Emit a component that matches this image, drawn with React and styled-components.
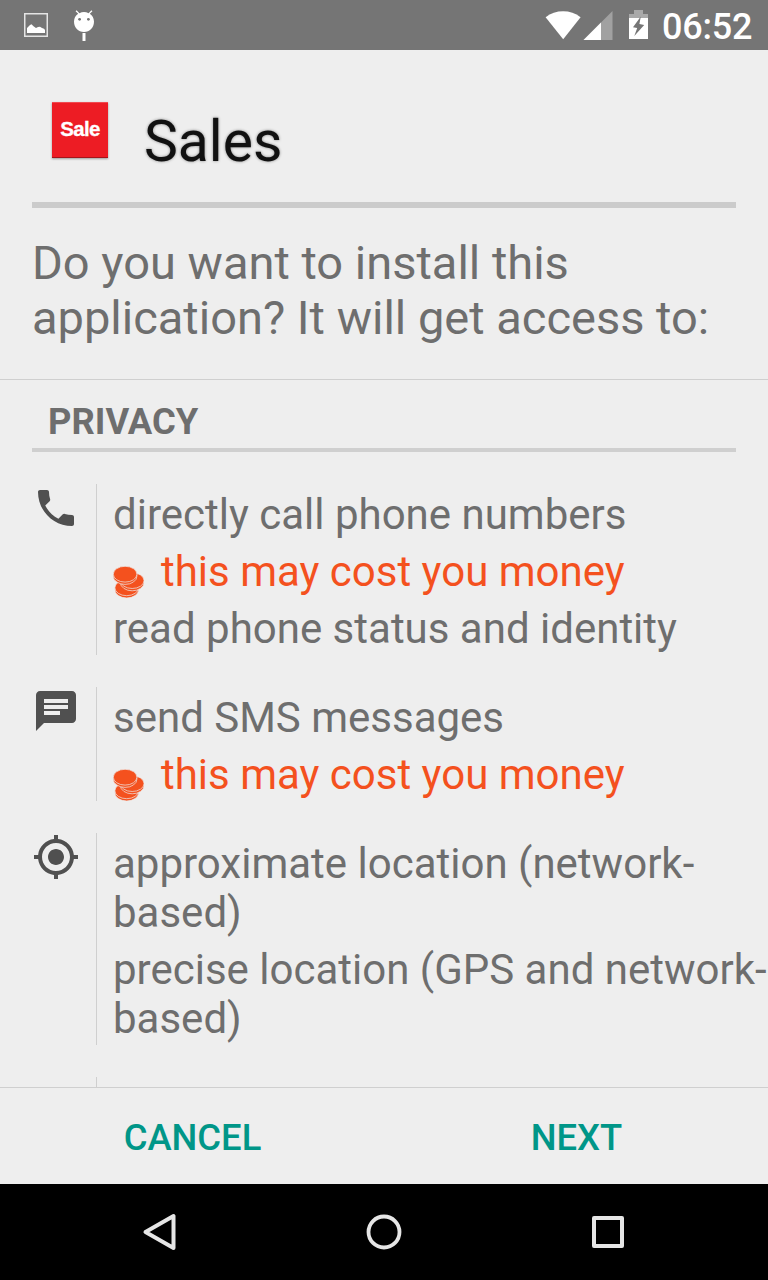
import React from "react";
import styled, { createGlobalStyle } from "styled-components";

const GlobalStyle = createGlobalStyle`
  * { box-sizing: border-box; }
  body { margin: 0; background: #eeeeee; }
`;

const Screen = styled.div`
  display: flex;
  flex-direction: column;
  width: 768px;
  height: 1280px;
  overflow: hidden;
  background: #eeeeee;
  color: #6e6e6e;
  font-family: Roboto, sans-serif;
  white-space: nowrap;
`;

const Svg = styled.svg`
  display: block;
  flex: none;
  overflow: visible;
`;

const StatusBar = styled.header`
  display: flex;
  flex: none;
  justify-content: space-between;
  height: 50px;
  background: #757575;
  color: #fff;
`;

const StatusGroup = styled.div`
  display: flex;
  height: 50px;
`;

const Clock = styled.span`
  width: 120px;
  padding: 2px 0 0 14px;
  font-size: 36px;
  font-weight: 500;
  letter-spacing: -0.2px;
  line-height: 50px;
`;

const TitleBar = styled.div`
  display: flex;
  flex: none;
  height: 158px;
  margin: 0 32px;
  padding: 52px 0 0 20px;
  border-bottom: 6px solid #cbcbcb;
`;

const AppIcon = styled.div`
  width: 56px;
  height: 56px;
  flex: none;
  background: #ed1c24;
  border-top: 1px solid #f14950;
  border-bottom: 1px solid #a5141a;
  box-shadow: 0 1px 2px rgba(0, 0, 0, 0.35);
  color: #fff;
  font: bold 20.5px/51px "Liberation Sans", sans-serif;
  letter-spacing: -0.7px;
  text-align: center;
  -webkit-text-stroke: 0.3px #fff;
`;

const Title = styled.h1`
  margin: 6px 0 0 36px;
  color: #111;
  font-size: 57px;
  font-weight: 400;
  line-height: 68px;
  text-shadow: 0 0 3px rgba(0, 0, 0, 0.45);
`;

const Question = styled.p`
  flex: none;
  height: 172px;
  margin: 0;
  padding: 27px 32px 0;
  border-bottom: 1px solid #cfcfcf;
  font-size: 47px;
  line-height: 55px;
`;

const SectionTitle = styled.h2`
  flex: none;
  height: 72px;
  margin: 0 32px;
  padding: 20px 16px 0;
  border-bottom: 4px solid #cfcfcf;
  font-size: 36.4px;
  font-weight: 700;
  line-height: 43px;
`;

const Permissions = styled.main`
  display: flex;
  flex: 1;
  flex-direction: column;
  gap: 32px;
  min-height: 0;
  padding-top: 32px;
  overflow: hidden;
`;

const Group = styled.section`
  display: flex;
  flex: none;
  padding-left: 32px;
`;

const IconCell = styled.div`
  flex: none;
  width: 64px;
  color: #505050;
`;

const Lines = styled.div`
  min-height: 57px;
  padding-left: 16px;
  border-left: 1px solid #cfcfcf;
`;

const Line = styled.div`
  display: flex;
  padding: 6px 0 2px;
  color: ${(p) => (p.$warning ? "#f4511e" : "#6e6e6e")};
  font-size: 42px;
  line-height: 49px;
`;

const CoinBox = styled.span`
  width: 48px;
  height: 49px;
  padding-top: 19px;
`;

const ButtonBar = styled.div`
  display: flex;
  flex: none;
  height: 97px;
  border-top: 1px solid #cfcfcf;
`;

const BarButton = styled.button`
  flex: 1;
  padding: 2px 0 0 1px;
  border: 0;
  background: none;
  color: #009688;
  font: 500 36.4px/43px Roboto, sans-serif;
`;

const NavBar = styled.nav`
  display: flex;
  flex: none;
  align-items: center;
  justify-content: center;
  gap: 176px;
  height: 96px;
  background: #000;
`;

const PHONE =
  "M6.62 10.79c1.44 2.83 3.76 5.14 6.59 6.59l2.2-2.2c.27-.27.67-.36 1.02-.24 1.12.37 2.33.57 3.57.57.55 0 1 .45 1 1V20c0 .55-.45 1-1 1-9.39 0-17-7.61-17-17 0-.55.45-1 1-1h3.5c.55 0 1 .45 1 1 0 1.25.2 2.45.57 3.57.11.35.03.74-.25 1.02l-2.2 2.2z";
const CHAT =
  "M20 2H4c-1.1 0-1.99.9-1.99 2L2 22l4-4h14c1.1 0 2-.9 2-2V4c0-1.1-.9-2-2-2zM6 9h12v2H6V9zm8 5H6v-2h8v2zm4-6H6V6h12v2z";
const LOCATION =
  "M12 8c-2.21 0-4 1.79-4 4s1.79 4 4 4 4-1.79 4-4-1.79-4-4-4zm8.94 3c-.46-4.17-3.77-7.48-7.94-7.94V1h-2v2.06C6.83 3.52 3.52 6.83 3.06 11H1v2h2.06c.46 4.17 3.77 7.48 7.94 7.94V23h2v-2.06c4.17-.46 7.48-3.77 7.94-7.94H23v-2h-2.06zM12 19c-3.87 0-7-3.13-7-7s3.13-7 7-7 7 3.13 7 7-3.13 7-7 7z";

const Coin = ({ x, y }) => (
  <g transform={`translate(${x} ${y})`} stroke="#eeeeee" strokeWidth="0.7">
    <path d="M-11.8 0v2a11.8 8.2 0 0 0 23.6 0V0z" />
    <ellipse rx="11.8" ry="7.9" />
  </g>
);

const Coins = () => (
  <CoinBox>
    <Svg width="32" height="32" fill="#f4511e">
      <Coin x={13.7} y={21.8} />
      <Coin x={19.2} y={14.6} />
      <Coin x={12.1} y={8.2} />
    </Svg>
  </CoinBox>
);

const Warning = () => (
  <Line $warning>
    <Coins />
    this may cost you money
  </Line>
);

const PermissionGroup = ({ icon, children }) => (
  <Group>
    <IconCell>
      {icon && (
        <Svg width="48" height="48" viewBox="0 0 24 24" fill="currentColor">
          <path d={icon} />
        </Svg>
      )}
    </IconCell>
    <Lines>{children}</Lines>
  </Group>
);

export default function App() {
  return (
    <Screen>
      <GlobalStyle />
      <StatusBar>
        <StatusGroup>
          <Svg width="110" height="50" fill="#fff">
            <rect x="24.75" y="13.75" width="22.5" height="22.5" fill="none" stroke="#e4e4e4" strokeWidth="1.5" />
            <path d="M27 33v-5l3-3 1.500-.7 2 2 2.500 1.700 2-1 2-.2 2 1.200 2 .8 1 1.200v3z" />
            <path d="M74 21.500a10 9.700 0 0 1 4.200-7.700l-2.600-2.600 1-1 2.800 3a10.500 10.500 0 0 1 9.200 0l2.800-3 1 1-2.600 2.600A10 10 0 0 1 94 21.500c0 6-4.200 10.500-10 10.500S74 27.500 74 21.500z" />
            <circle cx="79.600" cy="19.300" r="1.400" fill="#757575" />
            <circle cx="88.400" cy="19.300" r="1.400" fill="#757575" />
            <path d="M82.500 33h3v8h-3z" />
          </Svg>
        </StatusGroup>
        <StatusGroup>
          <Svg width="118" height="50" viewBox="530 0 118 50" fill="#fff">
            <path d="M563.200 39.200 545.600 17.200A29 29 0 0 1 580.600 17.200z" />
            <path d="M612.500 11v29H583.500z" opacity=".32" />
            <path d="M601 22.500V40H583.500z" />
            <path d="M629 18v-4h5v-4h9v4h5v4z" opacity=".38" />
            <path d="M629 18h19v21h-19z" />
            <path d="M640.800 16.500 633 27.300l4.200.6-2.900 8 9.900-10.800-4.800-1.200z" fill="#757575" />
          </Svg>
          <Clock>06:52</Clock>
        </StatusGroup>
      </StatusBar>

      <TitleBar>
        <AppIcon>Sale</AppIcon>
        <Title>Sales</Title>
      </TitleBar>

      <Question>
        Do you want to install this
        <br />
        application? It will get access to:
      </Question>

      <SectionTitle>PRIVACY</SectionTitle>

      <Permissions>
        <PermissionGroup icon={PHONE}>
          <Line>directly call phone numbers</Line>
          <Warning />
          <Line>read phone status and identity</Line>
        </PermissionGroup>
        <PermissionGroup icon={CHAT}>
          <Line>send SMS messages</Line>
          <Warning />
        </PermissionGroup>
        <PermissionGroup icon={LOCATION}>
          <Line>
            approximate location (network-
            <br />
            based)
          </Line>
          <Line>
            precise location (GPS and network-
            <br />
            based)
          </Line>
        </PermissionGroup>
        <PermissionGroup />
      </Permissions>

      <ButtonBar>
        <BarButton>CANCEL</BarButton>
        <BarButton>NEXT</BarButton>
      </ButtonBar>

      <NavBar>
        <Svg width="48" height="48" fill="none" stroke="#e6e6e6" strokeWidth="4" strokeLinejoin="round">
          <path d="M9.500 24 37.500 8v32z" />
        </Svg>
        <Svg width="48" height="48" fill="none" stroke="#e6e6e6" strokeWidth="3.800">
          <circle cx="24" cy="24" r="15.500" />
        </Svg>
        <Svg width="48" height="48" fill="none" stroke="#e6e6e6" strokeWidth="4" strokeLinejoin="round">
          <path d="M10 10h28v28H10z" />
        </Svg>
      </NavBar>
    </Screen>
  );
}
